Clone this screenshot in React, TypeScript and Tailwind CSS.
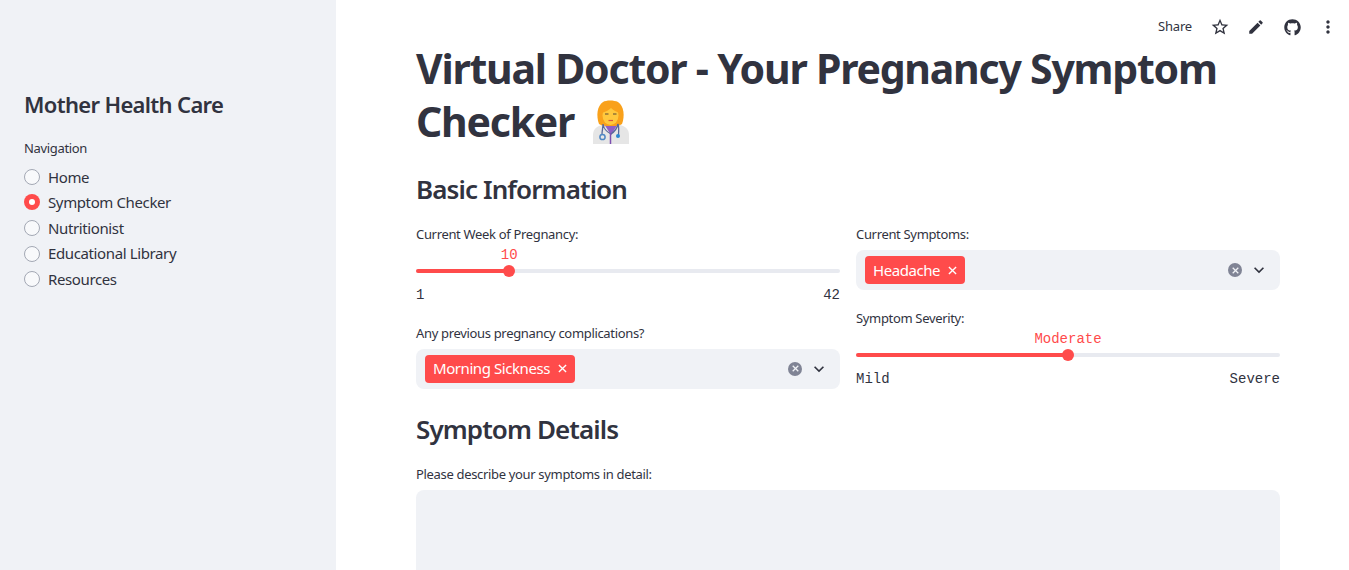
import { MdStarBorder, MdEdit, MdMoreVert, MdExpandMore } from "react-icons/md";
import { FaGithub } from "react-icons/fa";

const sans = "font-['Noto_Sans',sans-serif]";
const mono = "font-['Liberation_Mono',monospace]";

function DoctorEmoji() {
  return (
    <svg viewBox="0 0 36 44" width="36" height="44" className="ml-[19px] shrink-0" aria-hidden="true">
      <path d="M0 44v-9c0-6 4-9 10-10.500l8-2 8 2c6 1.500 10 4.500 10 10.500v9z" fill="#e6e6e6" />
      <path d="M11 24l7 11 7-11-7-3z" fill="#8f5fc4" />
      <path d="M6 24C3 16 4 6 10 2c3-2 11-2 15 0 6 4 7 14 4 22-3 2-6 2-11 2s-9 0-12-2z" fill="#f9a11b" />
      <ellipse cx="17.500" cy="15.500" rx="8" ry="9.500" fill="#ffc83d" />
      <path d="M9 13c3-1 7-3 9-5 2 2 6 4 8 5 0-6-3-10-8-10S9 7 9 13z" fill="#f9a11b" />
      <path d="M12 14h3.500M20 14h3.500" stroke="#5a4a35" strokeWidth="1" />
      <path d="M15.500 20.500h4.500" stroke="#d8573f" strokeWidth="1.200" />
      <path d="M10 24c0 4-1 7-1 10M25 24c1 3 .8 7 .5 11M10 24c1 6 4 8 8 10 3-2 6-5 7-10" fill="none" stroke="#56689a" strokeWidth="1.300" />
      <circle cx="9.500" cy="37" r="2.600" fill="none" stroke="#4f87c4" strokeWidth="1.500" />
      <circle cx="25" cy="36" r="2" fill="#2c88d0" />
      <path d="M17.500 33v11" stroke="#7c4fb0" strokeWidth="1.500" />
    </svg>
  );
}

function XMark({ size, width }: { size: number; width: number }) {
  return (
    <svg viewBox="0 0 10 10" width={size} height={size} aria-hidden="true">
      <path d="M1 1l8 8M9 1l-8 8" stroke="currentColor" strokeWidth={width} fill="none" />
    </svg>
  );
}

function Label({ children }: { children: string }) {
  return <p className="text-[13px] leading-[21px] tracking-[-0.33px] text-[#31333f]">{children}</p>;
}

function Slider({ label, value, percent, min, max }: { label: string; value: string; percent: number; min: string; max: string }) {
  return (
    <div>
      <Label>{label}</Label>
      <div className="relative mt-[24px] h-1 rounded-full bg-[#e8eaf0]">
        <div className="h-1 rounded-full bg-[#ff4b4b]" style={{ width: `${percent}%` }} />
        <div className="absolute top-[-4px] h-3 w-3 -translate-x-1/2 rounded-full bg-[#ff4b4b]" style={{ left: `${percent}%` }} />
        <div className={`absolute top-[-23px] -translate-x-1/2 whitespace-nowrap text-[14px] leading-[18px] text-[#ff4b4b] ${mono}`} style={{ left: `${percent}%` }}>
          {value}
        </div>
      </div>
      <div className={`mt-[12.5px] flex justify-between text-[14px] leading-[18px] text-[#31333f] ${mono}`}>
        <span>{min}</span>
        <span>{max}</span>
      </div>
    </div>
  );
}

function MultiSelect({ label, tag }: { label: string; tag: string }) {
  return (
    <div>
      <Label>{label}</Label>
      <div className="mt-[5px] flex h-10 items-center rounded-lg bg-[#f0f2f6] pl-[9px] pr-[11px]">
        <div className="flex h-7 items-center rounded bg-[#ff4b4b] pl-2 pr-2 text-[15px] tracking-[-0.43px] text-white">
          <span>{tag}</span>
          <span className="ml-2">
            <XMark size={9} width={1.500} />
          </span>
        </div>
        <div className="ml-auto flex h-[14px] w-[14px] items-center justify-center rounded-full bg-[#808495] text-[#f0f2f6]">
          <XMark size={7} width={1.800} />
        </div>
        <MdExpandMore className="ml-[7px] text-[#31333f]" size={20} />
      </div>
    </div>
  );
}

const nav = ["Home", "Symptom Checker", "Nutritionist", "Educational Library", "Resources"];

export default function App() {
  return (
    <div className={`flex h-screen overflow-hidden bg-white text-[#31333f] ${sans}`}>
      <aside className="w-[336px] shrink-0 bg-[#f0f2f6] px-6 pt-[88px]">
        <h2 className="text-[22px] font-semibold leading-[32px] tracking-[-0.67px]">Mother Health Care</h2>
        <p className="mt-[18px] text-[13px] leading-[21px] tracking-[-0.33px]">Navigation</p>
        <ul className="mt-[5px]">
          {nav.map((item) => {
            const active = item === "Symptom Checker";
            return (
              <li key={item} className="flex h-[25.6px] items-center gap-2 text-[15px] tracking-[-0.38px]">
                {active ? (
                  <span className="flex h-4 w-4 items-center justify-center rounded-full bg-[#ff4b4b]">
                    <span className="h-[6px] w-[6px] rounded-full bg-white" />
                  </span>
                ) : (
                  <span className="h-4 w-4 rounded-full border border-[#a3a8b4] bg-[#f8f9fb]" />
                )}
                <span>{item}</span>
              </li>
            );
          })}
        </ul>
      </aside>

      <main className="relative flex-1 overflow-hidden">
        <div className="absolute right-[3px] top-[17px] flex h-5 items-center">
          <span className="mr-[10px] text-[13px] tracking-[-0.2px]">Share</span>
          <span className="flex w-9 justify-center"><MdStarBorder size={20} /></span>
          <span className="flex w-9 justify-center"><MdEdit size={18} /></span>
          <span className="flex w-9 justify-center"><FaGithub size={17} /></span>
          <span className="flex w-9 justify-center"><MdMoreVert size={20} /></span>
        </div>

        <div className="ml-[80px] w-[864px] pt-[42px]">
          <h1 className="text-[41px] font-bold leading-[53px] tracking-[-1.23px]">
            Virtual Doctor - Your Pregnancy Symptom
            <span className="flex items-center">
              Checker <DoctorEmoji />
            </span>
          </h1>
          <h2 className="mt-[24px] text-[26px] font-semibold leading-[34px] tracking-[-0.9px]">Basic Information</h2>

          <div className="mt-[18px] grid grid-cols-2 gap-x-4">
            <div className="flex flex-col gap-[19px]">
              <Slider label="Current Week of Pregnancy:" value="10" percent={22} min="1" max="42" />
              <MultiSelect label="Any previous pregnancy complications?" tag="Morning Sickness" />
            </div>
            <div className="flex flex-col gap-[18px]">
              <MultiSelect label="Current Symptoms:" tag="Headache" />
              <Slider label="Symptom Severity:" value="Moderate" percent={50} min="Mild" max="Severe" />
            </div>
          </div>

          <h2 className="mt-[23px] text-[26px] font-semibold leading-[34px] tracking-[-0.9px]">Symptom Details</h2>
          <div className="mt-[18px]">
            <Label>Please describe your symptoms in detail:</Label>
            <div className="mt-[5px] h-[140px] rounded-lg bg-[#f0f2f6]" />
          </div>
        </div>
      </main>
    </div>
  );
}
